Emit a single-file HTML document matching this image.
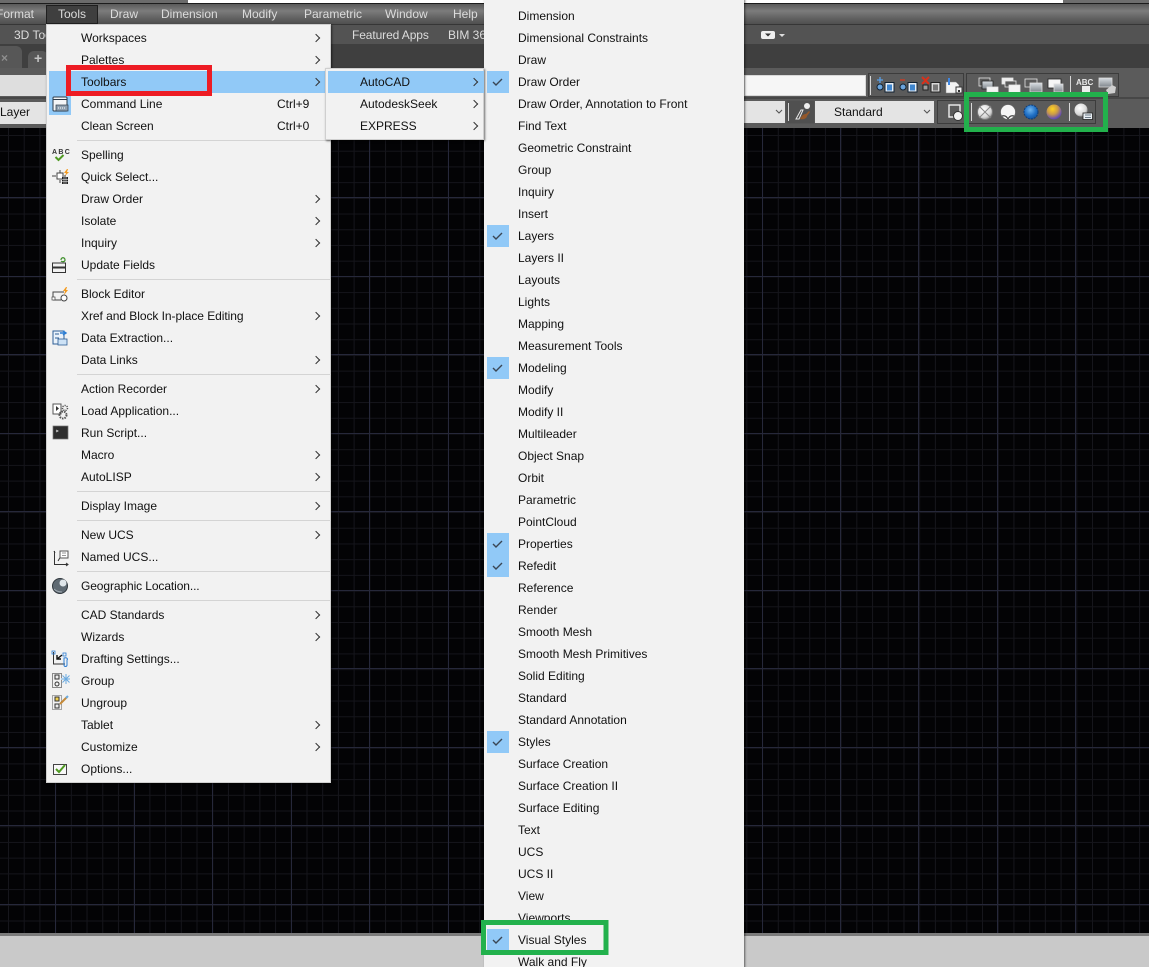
<!DOCTYPE html>
<html><head><meta charset="utf-8"><style>
html,body{margin:0;padding:0;width:1149px;height:967px;overflow:hidden;background:#5a5a5a}
body{position:relative;font:12px "Liberation Sans",sans-serif}
.b{position:absolute}
.t{position:absolute;white-space:nowrap;color:#dcdcdc;line-height:14px;height:14px}
.m{position:absolute;background:#f2f2f2;box-shadow:1px 1px 2px rgba(0,0,0,.55)}
.i{position:absolute;white-space:nowrap;color:#111;line-height:16px;height:16px;margin-top:-8px}
.a::after{content:"";position:absolute;width:5px;height:5px;border-top:1px solid #333;border-right:1px solid #333;transform:rotate(45deg);top:5px}
.l .i{left:34px;width:245px}
.l .a::after{left:232px}
.l .k{position:absolute;left:230px;color:#111;line-height:16px;margin-top:-8px}
.l .sep{position:absolute;left:30px;width:254px;height:1px;background:#d4d4d4}
.n .i{left:34px;width:120px}
.n .a::after{left:111px}
.r .i{left:34px}
.hl{position:absolute;background:#91c9f7}
.box{position:absolute;box-sizing:border-box}
</style></head><body>

<!-- top chrome -->
<div class="b" style="left:0;top:0;width:188px;height:3px;background:#6b6b6b"></div>
<div class="b" style="left:188px;top:0;width:875px;height:3px;background:#fff"></div>
<div class="b" style="left:1063px;top:0;width:86px;height:3px;background:#6e6e6e"></div>
<div class="b" style="left:0;top:3px;width:1149px;height:1px;background:#1c1c1c"></div>
<div class="b" style="left:0;top:4px;width:1149px;height:20px;background:linear-gradient(#5a5a5a,#7c7c7c 35%,#5e5e5e 75%,#4f4f4f)"></div>
<div class="b" style="left:0;top:24px;width:1149px;height:1px;background:#363636"></div>
<div class="b" style="left:0;top:25px;width:1149px;height:19px;background:#535353"></div>
<div class="b" style="left:0;top:44px;width:1149px;height:24px;background:#3f3f3f"></div>
<div class="b" style="left:0;top:68px;width:1149px;height:60px;background:#5b5b5b"></div>
<div class="b" style="left:0;top:97px;width:1149px;height:2px;background:#474747"></div>

<!-- tabs -->
<div class="b" style="left:0;top:46px;width:22px;height:22px;background:#575757;border-radius:0 6px 0 0"></div>
<div class="t" style="left:1px;top:51px;color:#8f8f8f;font-weight:bold">×</div>
<div class="b" style="left:28px;top:51px;width:20px;height:17px;background:#575757;border-radius:6px 6px 0 0"></div>
<div class="t" style="left:34px;top:51px;color:#c4c4c4;font-weight:bold;font-size:14px">+</div>

<!-- left toolbar stubs -->
<div class="b" style="left:0;top:75px;width:46px;height:21px;background:#dedede"></div>
<div class="b" style="left:0;top:102px;width:46px;height:22px;background:#e4e4e4"></div>
<div class="t" style="left:0;top:105px;color:#111">Layer</div>

<!-- menu bar -->
<div class="box" style="left:46px;top:5px;width:52px;height:19px;background:#3f3f3f;border:1px solid #1f1f1f"></div>
<div class="t" style="left:-4px;top:7px">Format</div>
<div class="t" style="left:58px;top:7px">Tools</div>
<div class="t" style="left:110px;top:7px">Draw</div>
<div class="t" style="left:161px;top:7px">Dimension</div>
<div class="t" style="left:242px;top:7px">Modify</div>
<div class="t" style="left:304px;top:7px">Parametric</div>
<div class="t" style="left:385px;top:7px">Window</div>
<div class="t" style="left:453px;top:7px">Help</div>
<div class="t" style="left:14px;top:28px">3D Tools</div>
<div class="t" style="left:352px;top:28px;letter-spacing:-.1px">Featured Apps</div>
<div class="t" style="left:448px;top:28px">BIM 360</div>

<!-- right toolbars -->
<div class="b" style="left:744px;top:75px;width:122px;height:21px;background:#f6f6f6;border:1px solid #d8d8d8;box-sizing:border-box"></div>
<div class="b" style="left:744px;top:101px;width:41px;height:22px;background:#e4e4e4"></div>
<div class="b" style="left:815px;top:101px;width:119px;height:22px;background:#e4e4e4"></div>
<div class="t" style="left:834px;top:105px;color:#111">Standard</div>

<svg class="b" style="left:0;top:0" width="1149" height="128" fill="none">
<defs>
<radialGradient id="wg" cx=".4" cy=".35" r=".7"><stop offset="0" stop-color="#fff"/><stop offset=".7" stop-color="#d8d8d8"/><stop offset="1" stop-color="#8a8a8a"/></radialGradient>
<radialGradient id="bl" cx=".45" cy=".35" r=".7"><stop offset="0" stop-color="#6fb4ee"/><stop offset=".6" stop-color="#1f6fc4"/><stop offset="1" stop-color="#124f96"/></radialGradient>
<radialGradient id="yp" cx=".4" cy=".3" r=".8"><stop offset="0" stop-color="#ffd21f"/><stop offset=".45" stop-color="#c99a4a"/><stop offset=".8" stop-color="#6a50b0"/><stop offset="1" stop-color="#4b3d94"/></radialGradient>
<linearGradient id="gb" x1="0" y1="0" x2="0" y2="1"><stop offset="0" stop-color="#d8dde2"/><stop offset="1" stop-color="#7f868c"/></linearGradient>
</defs>
<!-- top small icon -->
<rect x="761" y="31" width="14" height="8" rx="2" fill="#eee"/><path d="M765 33.500h6l-3 3z" fill="#333"/><path d="M779 34h6l-3 3z" fill="#ddd"/>
<!-- frames -->
<rect x="868.500" y="73.500" width="95" height="23" stroke="#3c3c3c"/>
<rect x="966.500" y="73.500" width="152" height="23" stroke="#3c3c3c"/>
<rect x="937.500" y="100.500" width="158" height="23" stroke="#3c3c3c"/>
<rect x="786.500" y="100.500" width="28" height="23" fill="#505050" stroke="none"/>
<path d="M870.500 76v19M1070.500 76v19M971.500 103v18M1069.500 103v18M788.500 103v18" stroke="#d8d8d8"/>
<!-- row 1 icons -->
<g>
<path d="M877 80h6M880 77v6" stroke="#5aa0e8" stroke-width="1.300"/><circle cx="880" cy="87" r="3" fill="#6aa4dc" stroke="#123"/><rect x="885" y="82.500" width="9" height="9.500" fill="#e8eef4" stroke="#123"/><rect x="887" y="84.500" width="5" height="6" fill="#3f86cf"/>
<path d="M900 80h5" stroke="#d63a20" stroke-width="1.300"/><circle cx="903" cy="87" r="3" fill="#6aa4dc" stroke="#123"/><rect x="908" y="82.500" width="9" height="9.500" fill="#e8eef4" stroke="#123"/><rect x="910" y="84.500" width="5" height="6" fill="#3f86cf"/>
<path d="M922 77l7 7M929 77l-7 7" stroke="#d9301a" stroke-width="2"/><rect x="923" y="85" width="5" height="5" fill="#9a9a9a" stroke="#222"/><rect x="931" y="82.500" width="9" height="9.500" fill="#d8d8d8" stroke="#222"/><rect x="933" y="84.500" width="5" height="6" fill="#777"/>
<path d="M946 82h10l3 3v8h-13z" fill="#f4f4f4" stroke="#888" stroke-width=".5"/><path d="M949 78v7" stroke="#3f86e0" stroke-width="2"/><rect x="956" y="87" width="6" height="6" fill="#f4f4f4" stroke="#333"/><rect x="958" y="90" width="2" height="2" fill="#333"/>
</g>
<!-- draw order icons -->
<g stroke="#e6e6e6" stroke-width=".8">
<rect x="979" y="78" width="11" height="8" fill="#5b5b5b"/><rect x="982" y="81" width="11" height="8" fill="url(#gb)" stroke="#222"/><rect x="987" y="87" width="11" height="5" fill="#f4f4f4"/>
<rect x="1002" y="78" width="11" height="6" fill="#eee"/><rect x="1005" y="81" width="11" height="6" fill="#5b5b5b"/><rect x="1009" y="85" width="11" height="8" fill="#f4f4f4"/>
<rect x="1025" y="79" width="12" height="8" fill="#5b5b5b"/><rect x="1030" y="83" width="12" height="9" fill="url(#gb)" stroke="#ddd"/>
<rect x="1048" y="79" width="13" height="9" fill="#f6f6f6" stroke="#222"/><rect x="1054" y="84" width="9" height="8" fill="url(#gb)" stroke="#ddd"/>
</g>
<path d="M1082 86h8v6h-8z" fill="#ececec"/><text x="1076" y="85" font-family="Liberation Sans" font-size="8" font-weight="bold" fill="#e8e8e8">ABC</text><path d="M1089 92l3 0-2 2z" fill="#000"/>
<rect x="1099" y="78" width="13" height="9" fill="url(#gb)" stroke="#ddd" stroke-width=".8"/><path d="M1106 90l6-5 4 2-1 6-7 1z" fill="#cfcfcf"/>
<!-- chevrons -->
<path d="M776 110l3 3 3-3M924 110l3 3 3-3" stroke="#555" stroke-width="1.100"/>
<!-- brush -->
<path d="M796 119l5-9 2 0-4 9z" fill="none" stroke="#e8e8e8"/><circle cx="807" cy="106" r="3" fill="#eee"/><path d="M800 119c2-4 4-5 6-5l3-3 1 1-3 4c0 2-3 4-7 3z" fill="#94582a"/>
<!-- rect+circle -->
<rect x="949" y="105" width="11" height="12" fill="#5b5b5b" stroke="#eee" stroke-width="1.400"/><circle cx="958" cy="116" r="4.500" fill="#f4f4f4" stroke="#333"/>
<!-- spheres -->
<circle cx="985" cy="112" r="7.500" fill="url(#wg)"/><path d="M979 106l12 12M991 106l-12 12" stroke="#888" stroke-width="1"/><circle cx="985" cy="112" r="7.500" stroke="#777"/>
<circle cx="1008" cy="112" r="7.500" fill="#f6f6f6"/><path d="M1002 116c3-1 5 1 6 3 1-2 3-4 6-3" stroke="#444" stroke-width="1.200"/><circle cx="1008" cy="112" r="7.500" stroke="#666" stroke-width=".7"/>
<circle cx="1031" cy="112" r="7" fill="url(#bl)" stroke="#0f3d78" stroke-dasharray="2 1"/>
<circle cx="1054" cy="112" r="7.500" fill="url(#yp)"/>
<circle cx="1081" cy="110" r="6.500" fill="url(#wg)"/><rect x="1083" y="113" width="9.500" height="6.500" fill="#e8edf2" stroke="#222" stroke-width=".8"/><path d="M1085 115h6M1085 117.500h6" stroke="#456" stroke-width=".8"/>
</svg>

<!-- canvas -->
<svg class="b" style="left:0;top:128px" width="1149" height="806" shape-rendering="crispEdges">
<defs>
<pattern id="mi" width="15.71" height="15.71" patternUnits="userSpaceOnUse" x="8" y="7"><rect width="15.71" height="15.71" fill="#030305"/><rect width="1" height="15.71" fill="#16161c"/><rect width="15.71" height="1" fill="#15151b"/></pattern>
</defs>
<rect width="1149" height="806" fill="url(#mi)"/>
<g fill="#26283a">
<rect x="55" width="1" height="806"/><rect x="134" width="1" height="806"/><rect x="212" width="1" height="806"/><rect x="291" width="1" height="806"/><rect x="369" width="1" height="806"/><rect x="448" width="1" height="806"/><rect x="526" width="1" height="806"/><rect x="605" width="1" height="806"/><rect x="683" width="1" height="806"/><rect x="762" width="1" height="806"/><rect x="840" width="1" height="806"/><rect x="918" width="1" height="806"/><rect x="997" width="1" height="806"/><rect x="1075" width="1" height="806"/>
<rect y="69" width="1149" height="1"/><rect y="148" width="1149" height="1"/><rect y="226" width="1149" height="1"/><rect y="305" width="1149" height="1"/><rect y="383" width="1149" height="1"/><rect y="462" width="1149" height="1"/><rect y="540" width="1149" height="1"/><rect y="619" width="1149" height="1"/><rect y="697" width="1149" height="1"/><rect y="776" width="1149" height="1"/>
</g>
</svg>
<div class="b" style="left:0;top:933px;width:1149px;height:3px;background:#7b7b7b"></div>
<div class="b" style="left:0;top:936px;width:1149px;height:31px;background:#c9c9c9"></div>

<!-- right long menu -->
<div class="m r" style="left:484px;top:-4px;width:260px;height:975px">
<div class="hl" style="left:3px;top:75px;width:22px;height:22px"></div>
<div class="hl" style="left:3px;top:229px;width:22px;height:22px"></div>
<div class="hl" style="left:3px;top:361px;width:22px;height:22px"></div>
<div class="hl" style="left:3px;top:537px;width:22px;height:22px"></div>
<div class="hl" style="left:3px;top:559px;width:22px;height:22px"></div>
<div class="hl" style="left:3px;top:735px;width:22px;height:22px"></div>
<div class="hl" style="left:3px;top:933px;width:22px;height:22px"></div>
<div class="i" style="top:20px">Dimension</div>
<div class="i" style="top:42px">Dimensional Constraints</div>
<div class="i" style="top:64px">Draw</div>
<div class="i" style="top:86px">Draw Order</div>
<div class="i" style="top:108px">Draw Order, Annotation to Front</div>
<div class="i" style="top:130px">Find Text</div>
<div class="i" style="top:152px">Geometric Constraint</div>
<div class="i" style="top:174px">Group</div>
<div class="i" style="top:196px">Inquiry</div>
<div class="i" style="top:218px">Insert</div>
<div class="i" style="top:240px">Layers</div>
<div class="i" style="top:262px">Layers II</div>
<div class="i" style="top:284px">Layouts</div>
<div class="i" style="top:306px">Lights</div>
<div class="i" style="top:328px">Mapping</div>
<div class="i" style="top:350px">Measurement Tools</div>
<div class="i" style="top:372px">Modeling</div>
<div class="i" style="top:394px">Modify</div>
<div class="i" style="top:416px">Modify II</div>
<div class="i" style="top:438px">Multileader</div>
<div class="i" style="top:460px">Object Snap</div>
<div class="i" style="top:482px">Orbit</div>
<div class="i" style="top:504px">Parametric</div>
<div class="i" style="top:526px">PointCloud</div>
<div class="i" style="top:548px">Properties</div>
<div class="i" style="top:570px">Refedit</div>
<div class="i" style="top:592px">Reference</div>
<div class="i" style="top:614px">Render</div>
<div class="i" style="top:636px">Smooth Mesh</div>
<div class="i" style="top:658px">Smooth Mesh Primitives</div>
<div class="i" style="top:680px">Solid Editing</div>
<div class="i" style="top:702px">Standard</div>
<div class="i" style="top:724px">Standard Annotation</div>
<div class="i" style="top:746px">Styles</div>
<div class="i" style="top:768px">Surface Creation</div>
<div class="i" style="top:790px">Surface Creation II</div>
<div class="i" style="top:812px">Surface Editing</div>
<div class="i" style="top:834px">Text</div>
<div class="i" style="top:856px">UCS</div>
<div class="i" style="top:878px">UCS II</div>
<div class="i" style="top:900px">View</div>
<div class="i" style="top:922px">Viewports</div>
<div class="i" style="top:944px">Visual Styles</div>
<div class="i" style="top:966px">Walk and Fly</div>
</div>

<!-- main Tools menu -->
<div class="m l" style="left:46px;top:24px;width:285px;height:759px;border:1px solid #cfcfcf;box-sizing:border-box;margin:0">
<div class="hl" style="left:2px;top:46px;width:278px;height:22px"></div>
<div class="hl" style="left:2px;top:68px;width:22px;height:22px"></div>
<div class="i a" style="top:13px">Workspaces</div>
<div class="i a" style="top:35px">Palettes</div>
<div class="i a" style="top:57px">Toolbars</div>
<div class="i" style="top:79px">Command Line</div><div class="k" style="top:79px">Ctrl+9</div>
<div class="i" style="top:101px">Clean Screen</div><div class="k" style="top:101px">Ctrl+0</div>
<div class="sep" style="top:115px"></div>
<div class="i" style="top:130px">Spelling</div>
<div class="i" style="top:152px">Quick Select...</div>
<div class="i a" style="top:174px">Draw Order</div>
<div class="i a" style="top:196px">Isolate</div>
<div class="i a" style="top:218px">Inquiry</div>
<div class="i" style="top:240px">Update Fields</div>
<div class="sep" style="top:254px"></div>
<div class="i" style="top:269px">Block Editor</div>
<div class="i a" style="top:291px;letter-spacing:-.05px">Xref and Block In-place Editing</div>
<div class="i" style="top:313px">Data Extraction...</div>
<div class="i a" style="top:335px">Data Links</div>
<div class="sep" style="top:349px"></div>
<div class="i a" style="top:364px">Action Recorder</div>
<div class="i" style="top:386px">Load Application...</div>
<div class="i" style="top:408px">Run Script...</div>
<div class="i a" style="top:430px">Macro</div>
<div class="i a" style="top:452px">AutoLISP</div>
<div class="sep" style="top:466px"></div>
<div class="i a" style="top:481px">Display Image</div>
<div class="sep" style="top:495px"></div>
<div class="i a" style="top:510px">New UCS</div>
<div class="i" style="top:532px">Named UCS...</div>
<div class="sep" style="top:546px"></div>
<div class="i" style="top:561px;letter-spacing:-.1px">Geographic Location...</div>
<div class="sep" style="top:575px"></div>
<div class="i a" style="top:590px">CAD Standards</div>
<div class="i a" style="top:612px">Wizards</div>
<div class="i" style="top:634px">Drafting Settings...</div>
<div class="i" style="top:656px">Group</div>
<div class="i" style="top:678px">Ungroup</div>
<div class="i a" style="top:700px">Tablet</div>
<div class="i a" style="top:722px">Customize</div>
<div class="i" style="top:744px">Options...</div>
</div>

<!-- AutoCAD submenu -->
<div class="m n" style="left:325px;top:68px;width:159px;height:72px;border:1px solid #cfcfcf;box-sizing:border-box">
<div class="hl" style="left:2px;top:2px;width:156px;height:22px"></div>
<div class="i a" style="top:13px">AutoCAD</div>
<div class="i a" style="top:35px">AutodeskSeek</div>
<div class="i a" style="top:57px">EXPRESS</div>
</div>

<!-- menu icons + checks -->
<svg class="b" style="left:0;top:0" width="1149" height="967" fill="none">
<g stroke="#3a4654" stroke-width="1.400">
<path d="M493 82l3 3 6-6M493 236l3 3 6-6M493 368l3 3 6-6M493 544l3 3 6-6M493 566l3 3 6-6M493 742l3 3 6-6M493 940l3 3 6-6"/>
</g>
<!-- command line -->
<rect x="53" y="97" width="14" height="14" rx="1" fill="#f4f6f8" stroke="#2c3a48"/><path d="M53 99.500h14" stroke="#2c3a48"/><rect x="56" y="105" width="12" height="6" fill="#8fa0b0" stroke="#2c3a48" stroke-width=".7"/><path d="M58 108h8" stroke="#fff" stroke-dasharray="1 1"/>
<!-- spelling -->
<text x="52" y="154" font-family="Liberation Sans" font-size="7" font-weight="bold" letter-spacing="1.300" fill="#333">ABC</text>
<path d="M55.500 157l3 3 5-5" stroke="#4f9a22" stroke-width="2"/>
<!-- quick select -->
<path d="M52 176h4M64 176h2M60 170v3M60 180v3" stroke="#444"/><rect x="57" y="173" width="6" height="6" fill="#fff" stroke="#444"/><path d="M67 169l-3 4h2l-1 3 4-4h-2l1-3z" fill="#f39a1e"/><rect x="62" y="177" width="6" height="7" fill="#222"/><path d="M62 179.500h6M62 181.500h6M64 177v7M66 177v7" stroke="#fff" stroke-width=".5"/>
<!-- update fields -->
<rect x="52.500" y="263" width="13" height="4" stroke="#333"/><rect x="52.500" y="268" width="13" height="4.500" stroke="#333"/><path d="M61 260c0-3 4-3 4 0M65 260c0 2-3 2-4 1" stroke="#3b8d27" stroke-width="1.200"/>
<!-- block editor -->
<path d="M53 300v-8h11M53 300h8" stroke="#444"/><circle cx="64" cy="298" r="3" fill="#fff" stroke="#444"/><path d="M66 287l-3 4h2l-1 4 4-5h-2l1-3z" fill="#f39a1e"/><rect x="52" y="297" width="3" height="3" fill="#fff" stroke="#444" stroke-width=".7"/>
<!-- data extraction -->
<rect x="53" y="331" width="11" height="13" fill="#eaf2fa" stroke="#2d5e95"/><path d="M55 334h4M55 338h4" stroke="#2d5e95"/><path d="M60 333h6M63 331l3 2-3 2" stroke="#2d7dd2" stroke-width="1.400"/><rect x="58" y="339" width="9" height="6" fill="#cde2f6" stroke="#2d5e95" stroke-width=".8"/>
<!-- load app -->
<rect x="53" y="404" width="8" height="10" fill="#fff" stroke="#555"/><path d="M56 406l3 2.500-3 2.500z" fill="#333"/><circle cx="63" cy="415" r="3.500" stroke="#555" stroke-width="2" stroke-dasharray="1.500 1"/><circle cx="65" cy="408" r="2.500" stroke="#555" stroke-width="1.500" stroke-dasharray="1.200 1"/>
<!-- run script -->
<rect x="53" y="426" width="15" height="13" fill="#2e2e2e" stroke="#777" stroke-width=".7"/><path d="M56 430l2 1-2 1" stroke="#ddd" stroke-width=".8"/>
<!-- named ucs -->
<path d="M54.500 551v13.500H68M54 551l1 2M66 563l2 1.500-2 1.500" stroke="#333"/><path d="M58 561l3-5" stroke="#333"/><rect x="60" y="551" width="8" height="7" fill="#fff" stroke="#555"/><path d="M62 553h4M62 555.500h4" stroke="#777" stroke-width=".7"/>
<!-- geo -->
<circle cx="60" cy="586" r="7.500" fill="#5f6a73" stroke="#30373d"/><circle cx="63" cy="583" r="3.500" fill="#dfe6ea"/><path d="M54 589c2 2 5 3 8 3" stroke="#9fa9b0"/>
<!-- drafting settings -->
<path d="M53.500 652v12H65" stroke="#333"/><path d="M57 659l5-4M57 655v4h4" stroke="#111" stroke-width="1.400"/><rect x="63" y="653" width="3" height="3" stroke="#2d7dd2" stroke-width=".8"/><rect x="52" y="651" width="3" height="3" stroke="#2d7dd2" stroke-width=".8"/><path d="M64 658c3-1 4 1 3 2v5a1.500 1.500 0 0 1-3 0z" stroke="#2d7dd2"/>
<!-- group -->
<rect x="52.500" y="673.500" width="9" height="14" stroke="#222" stroke-dasharray="1 1"/><rect x="55" y="675" width="4" height="4" fill="#eee" stroke="#333"/><circle cx="57" cy="684" r="2" stroke="#333"/><path d="M66 674v10M61 679h9M62.500 675.500l7 7M69.500 675.500l-7 7" stroke="#6aaae0"/>
<!-- ungroup -->
<rect x="52.500" y="695.500" width="9" height="14" stroke="#555" stroke-dasharray="1 1"/><rect x="55" y="697" width="4" height="4" fill="#f0d050" stroke="#333"/><rect x="55" y="704" width="4" height="4" fill="#eee" stroke="#333"/><path d="M60 704l7-7" stroke="#c58a3a" stroke-width="2"/><path d="M66 698l2-2" stroke="#6aaae0" stroke-width="2"/>
<!-- options -->
<rect x="53.500" y="764.500" width="13" height="10" fill="#f8f8f8" stroke="#444"/><path d="M56 769l3 3 6-7" stroke="#4f9a22" stroke-width="2"/>
<!-- annotation boxes -->
<rect x="68.500" y="67.500" width="141" height="26" stroke="#ed1c24" stroke-width="5"/>
<rect x="483.500" y="922.500" width="122.500" height="30" stroke="#22b14c" stroke-width="5"/>
<rect x="966.500" y="94.500" width="139" height="35" stroke="#22b14c" stroke-width="5"/>
</svg>

</body></html>
